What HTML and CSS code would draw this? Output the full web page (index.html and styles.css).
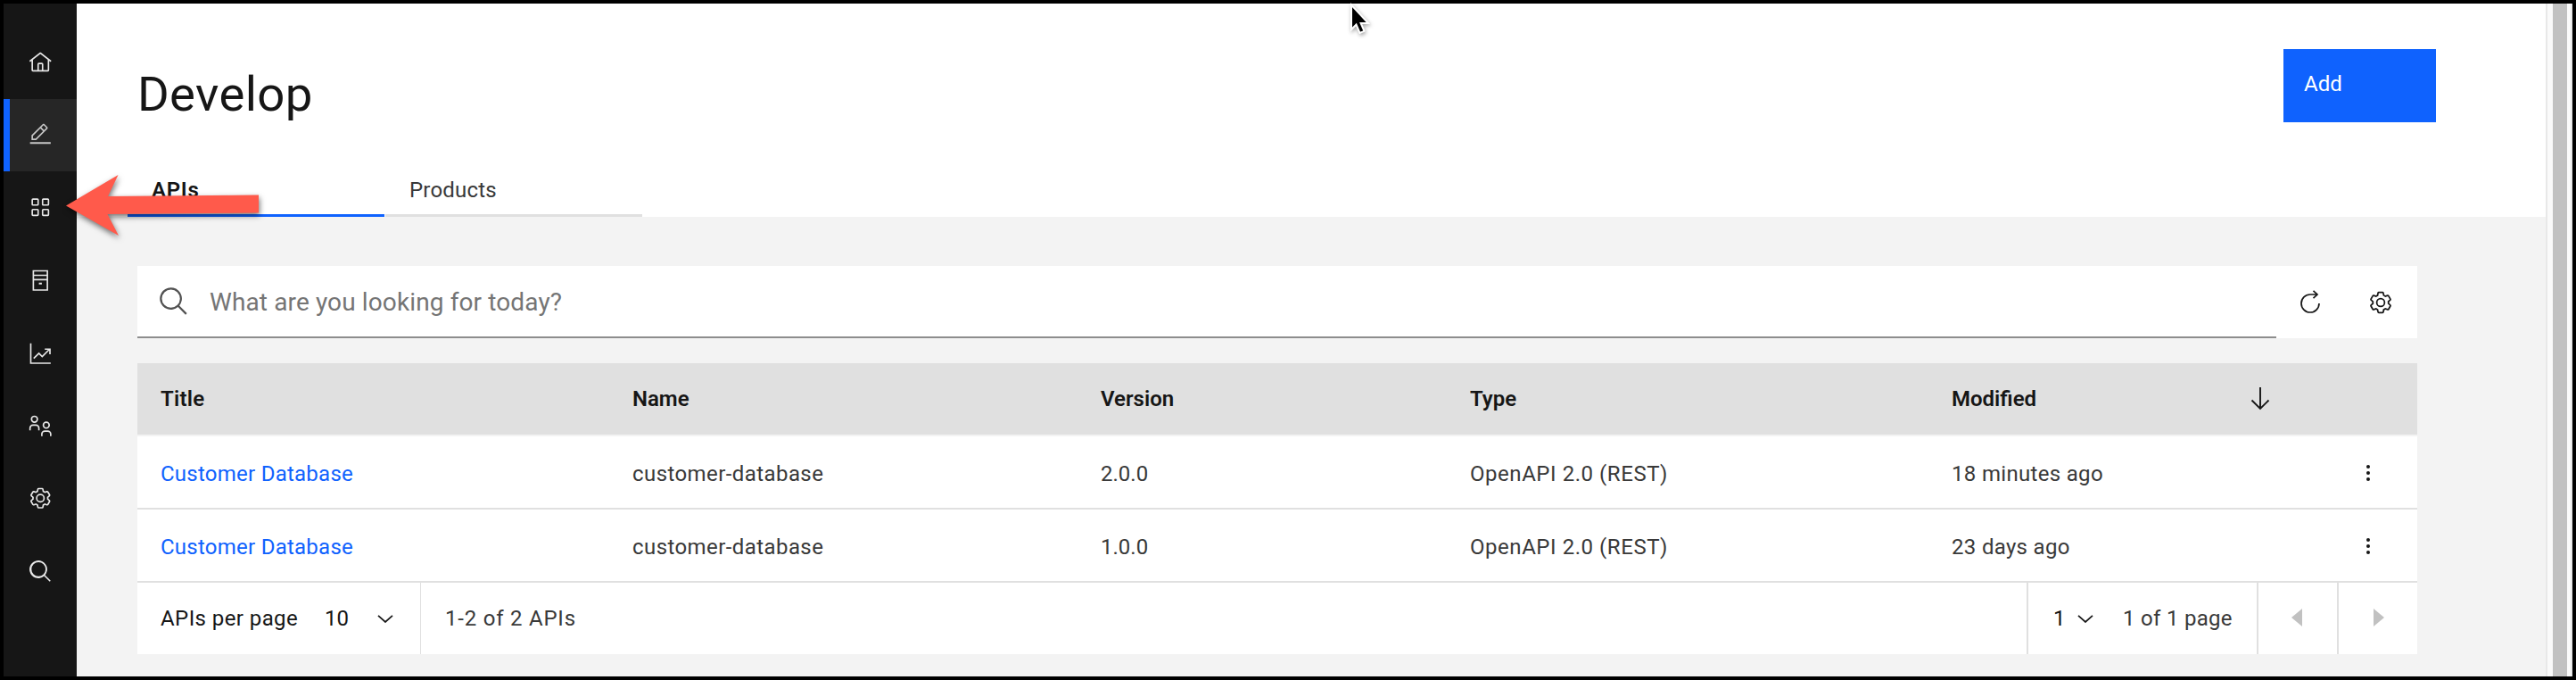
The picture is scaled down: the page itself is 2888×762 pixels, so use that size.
FILE: index.html
```
<!DOCTYPE html>
<html lang="en">
<head>
<meta charset="utf-8">
<title>Develop</title>
<link rel="stylesheet" href="styles.css">
</head>
<body>
<svg class="defs" width="0" height="0">
  <symbol id="gear" viewBox="0 0 32 32"><path d="M27,16.76c0-.25,0-.5,0-.76s0-.51,0-.77l1.92-1.68A2,2,0,0,0,29.3,11L26.94,7a2,2,0,0,0-1.73-1,2,2,0,0,0-.64.1l-2.43.82a11.35,11.35,0,0,0-1.31-.75l-.51-2.52a2,2,0,0,0-2-1.61H13.64a2,2,0,0,0-2,1.61l-.51,2.52a11.48,11.48,0,0,0-1.32.75L7.43,6.06A2,2,0,0,0,6.79,6,2,2,0,0,0,5.06,7L2.7,11a2,2,0,0,0,.41,2.51L5,15.24c0,.25,0,.5,0,.76s0,.51,0,.77L3.11,18.45A2,2,0,0,0,2.7,21L5.06,25a2,2,0,0,0,1.73,1,2,2,0,0,0,.64-.1l2.43-.82a11.35,11.35,0,0,0,1.31.75l.51,2.52a2,2,0,0,0,2,1.61h4.72a2,2,0,0,0,2-1.61l.51-2.52a11.48,11.48,0,0,0,1.32-.75l2.42.82a2,2,0,0,0,.64.1,2,2,0,0,0,1.73-1L29.3,21a2,2,0,0,0-.41-2.51ZM25.21,24l-3.43-1.16a8.86,8.86,0,0,1-2.71,1.57L18.36,28H13.64l-.71-3.55a9.36,9.36,0,0,1-2.7-1.57L6.79,24,4.43,20l2.72-2.4a8.9,8.9,0,0,1,0-3.13L4.43,12,6.79,8l3.43,1.16a8.86,8.86,0,0,1,2.71-1.57L13.64,4h4.72l.71,3.55a9.36,9.36,0,0,1,2.7,1.57L25.21,8,27.57,12l-2.72,2.4a8.9,8.9,0,0,1,0,3.13L27.57,20Z"/><path d="M16,22a6,6,0,1,1,6-6A5.94,5.94,0,0,1,16,22Zm0-10a3.91,3.91,0,0,0-4,4,3.91,3.91,0,0,0,4,4,3.91,3.91,0,0,0,4-4A3.91,3.91,0,0,0,16,12Z"/></symbol>
  <symbol id="search" viewBox="0 0 32 32"><path d="M29 27.6L21.4 20A11 11 0 1 0 20 21.4L27.6 29ZM4 13a9 9 0 1 1 9 9 9 9 0 0 1-9-9Z"/></symbol>
  <symbol id="search-nav" viewBox="0 0 32 32"><path d="M30 28.6L22.4 21A12 12 0 1 0 21 22.4L28.6 30ZM4 13.200a9.500 9.500 0 1 1 9.500 9.500 9.500 9.500 0 0 1-9.500-9.500Z"/></symbol>
  <symbol id="chevron" viewBox="0 0 18 9"><path d="M1 .8L9 8L17 .8" fill="none" stroke="currentColor" stroke-width="1.7"/></symbol>
</svg>
<div class="frame">
  <nav class="rail">
    <a class="rail-item"><svg class="icon" viewBox="0 0 32 32"><path d="M16.61 2.21a1 1 0 0 0-1.24 0L1 13.42l1.24 1.57L4 13.62V26a2 2 0 0 0 2 2H26a2 2 0 0 0 2-2V13.63L29.76 15 31 13.43ZM18 26H14V18h4Zm2 0V18a2 2 0 0 0-2-2H14a2 2 0 0 0-2 2v8H6V12.06l10-7.79 10 7.8V26Z"/></svg></a>
    <a class="rail-item active"><svg class="icon" viewBox="0 0 32 32"><path d="M2 27H30V29.2H2zM25.4 9c.8-.8.8-2 0-2.8l-3.6-3.6c-.8-.8-2-.8-2.8 0l-15 15V24h6.4zM20.4 4L24 7.6l-3 3L17.4 7zM6 22v-3.600l10-10 3.600 3.600-10 10z"/></svg></a>
    <a class="rail-item grid"><svg class="icon" viewBox="0 0 32 32"><path d="M12 4H6a2 2 0 0 0-2 2v6a2 2 0 0 0 2 2h6a2 2 0 0 0 2-2V6a2 2 0 0 0-2-2Zm0 8H6V6h6ZM26 4H20a2 2 0 0 0-2 2v6a2 2 0 0 0 2 2h6a2 2 0 0 0 2-2V6a2 2 0 0 0-2-2Zm0 8H20V6h6ZM12 18H6a2 2 0 0 0-2 2v6a2 2 0 0 0 2 2h6a2 2 0 0 0 2-2V20a2 2 0 0 0-2-2Zm0 8H6V20h6ZM26 18H20a2 2 0 0 0-2 2v6a2 2 0 0 0 2 2h6a2 2 0 0 0 2-2V20a2 2 0 0 0-2-2Zm0 8H20V20h6Z"/></svg></a>
    <a class="rail-item"><svg class="icon" viewBox="0 0 32 32"><path fill="none" stroke="currentColor" stroke-width="2" d="M6.500 3H25.500V29H6.500zM7 9H25M7 15H25"/><path d="M14 19h4v2.400h-4z"/></svg></a>
    <a class="rail-item"><svg class="icon" viewBox="0 0 32 32"><path fill="none" stroke="currentColor" stroke-width="2" d="M3 2V29H30M7 22.500L14 15.500L18.500 20L28.500 10M22 10H29V17"/></svg></a>
    <a class="rail-item"><svg class="icon" viewBox="0 0 32 32"><g fill="none" stroke="currentColor" stroke-width="2"><circle cx="8" cy="7" r="4"/><circle cx="24" cy="15" r="4"/><path d="M2 22V19a4 4 0 0 1 4-4H10a4 4 0 0 1 4 4V22M18 30V27a4 4 0 0 1 4-4H26a4 4 0 0 1 4 4V30"/></g></svg></a>
    <a class="rail-item"><svg class="icon"><use href="#gear"/></svg></a>
    <a class="rail-item"><svg class="icon"><use href="#search-nav"/></svg></a>
  </nav>
  <main class="main">
    <header class="head">
      <div class="head-top"><h1 class="title">Develop</h1><button class="add">Add</button></div>
      <div class="tabs"><a class="tab selected">APIs</a><a class="tab">Products</a></div>
    </header>
    <section class="content">
      <div class="toolbar">
        <div class="search"><svg class="search-icon"><use href="#search"/></svg><span class="placeholder">What are you looking for today?</span></div>
        <div class="tools">
          <svg class="refresh" viewBox="0 0 24 26"><path fill="none" stroke="currentColor" stroke-width="1.7" d="M22 15A10 10 0 1 1 12 5H20M15.500 .8L20 5L15.500 9.200"/></svg>
          <svg class="tool-gear"><use href="#gear"/></svg>
        </div>
      </div>
      <div class="table">
        <div class="row row-head"><span class="c-title">Title</span><span>Name</span><span>Version</span><span>Type</span><span>Modified</span><svg class="sort" viewBox="0 0 22 26"><path fill="none" stroke="currentColor" stroke-width="1.9" d="M11 0V24M1.500 14.500L11 24L20.500 14.500"/></svg></div>
        <div class="row"><a class="c-title link">Customer Database</a><span class="c-name">customer-database</span><span>2.0.0</span><span class="c-type">OpenAPI 2.0 (REST)</span><span class="c-mod">18 minutes ago</span><svg class="dots" viewBox="0 0 4 18"><circle cx="2" cy="2" r="2"/><circle cx="2" cy="9" r="2"/><circle cx="2" cy="16" r="2"/></svg></div>
        <div class="row"><a class="c-title link">Customer Database</a><span class="c-name">customer-database</span><span>1.0.0</span><span class="c-type">OpenAPI 2.0 (REST)</span><span class="c-mod">23 days ago</span><svg class="dots" viewBox="0 0 4 18"><circle cx="2" cy="2" r="2"/><circle cx="2" cy="9" r="2"/><circle cx="2" cy="16" r="2"/></svg></div>
      </div>
      <div class="pager">
        <div class="per-page"><span class="pp-label">APIs per page</span><span class="pp-value">10</span><svg class="chev"><use href="#chevron"/></svg></div>
        <span class="range">1-2 of 2 APIs</span>
        <div class="page-select"><span class="p-num">1</span><svg class="chev"><use href="#chevron"/></svg><span class="p-total">1 of 1 page</span></div>
        <div class="step prev"><svg class="tri" viewBox="0 0 12 20"><path d="M12 0V20L0 10Z"/></svg></div>
        <div class="step next"><svg class="tri" viewBox="0 0 12 20"><path d="M0 0V20L12 10Z"/></svg></div>
      </div>
    </section>
  </main>
  <div class="scroll"><div class="thumb"></div></div>
</div>
<svg class="arrow" viewBox="0 0 240 90"><path d="M14 50.500L72.500 16L61 40L230 38.500V58.500L60.500 60L73 84Z"/></svg>
<svg class="cursor" viewBox="0 0 24 40"><path d="M3 3.500V31L8.500 25.500L12.500 35L17.500 32.800L13.600 24H22Z" fill="#000" stroke="#fff" stroke-width="2"/></svg>
</body>
</html>
```
FILE: styles.css
```
* { box-sizing: border-box; }
body { margin: 0; width: 2888px; height: 762px; overflow: hidden; position: relative; font-family: Roboto, "Noto Sans", sans-serif; font-size: 24px; color: #161616; }
svg { display: block; fill: currentColor; flex: none; }
.defs { position: absolute; }
.frame { display: flex; width: 2888px; height: 762px; border: 4px solid #000; }

.rail { width: 82px; background: #161616; color: #e8e8e8; padding-top: 25.6px; flex: none; }
.rail-item { display: flex; align-items: center; justify-content: center; height: 81.4px; padding-left: 1px; }
.rail-item.active { background: #262626; color: #c6c6c6; border-left: 7px solid #0f62fe; padding: 0 6px 2px 0; }
.rail-item.grid { padding-bottom: 2px; }
.icon { width: 26.5px; height: 26.5px; }

.main { width: 2768px; background: #f3f3f3; flex: none; }
.head { height: 239px; background: #fff; display: flex; flex-direction: column; justify-content: space-between; }
.head-top { display: flex; justify-content: space-between; padding: 51px 123px 0 68px; }
.title { margin: 20px 0 0; font-size: 54.5px; line-height: 60px; font-weight: 400; letter-spacing: .35px; white-space: nowrap; }
.add { width: 171px; height: 82px; border: 0; padding: 0 0 4px 23px; background: #0f62fe; color: #fff; font: inherit; text-align: left; }
.tabs { display: flex; gap: 1px; padding-left: 57px; }
.tab { width: 288px; height: 62px; padding: 7px 0 0 27px; border-bottom: 3px solid #e0e0e0; color: #393939; line-height: 50px; letter-spacing: .2px; }
.tab.selected { border-color: #0f62fe; color: #161616; font-weight: 600; letter-spacing: .7px; }

.content { padding: 55px 0 0 68px; width: 2624px; }
.toolbar { display: flex; height: 81px; background: #fff; margin-bottom: 28px; }
.search { width: 2398px; border-bottom: 2px solid #8d8d8d; display: flex; align-items: center; padding-left: 23px; }
.search-icon { width: 36px; height: 36px; color: #525252; }
.placeholder { margin-left: 22px; padding-top: 2px; font-size: 28px; letter-spacing: .12px; color: #757575; white-space: nowrap; }
.tools { display: flex; align-items: center; padding-left: 26px; }
.refresh { width: 24px; height: 26px; margin-bottom: 2px; }
.tool-gear { width: 28px; height: 28px; margin-left: 53px; }

.row { display: grid; grid-template-columns: 529px 525px 414px 540px 334px 1fr; align-items: center; height: 82px; padding: 4px 0 0 26px; background: #fff; border-bottom: 2px solid #e0e0e0; white-space: nowrap; color: #393939; }
.row-head { background: #e0e0e0; border-color: #f3f3f3; color: #161616; font-weight: 600; padding-top: 0; padding-bottom: 1px; }
.c-title { letter-spacing: .25px; }
.c-name { letter-spacing: .42px; }
.c-type { letter-spacing: .55px; }
.c-mod { letter-spacing: .32px; }
.link { color: #0f62fe; }
.sort { width: 22px; height: 26px; margin-left: 1px; }
.dots { width: 4px; height: 18px; margin: -2px 0 0 131px; color: #161616; }

.pager { display: flex; align-items: center; height: 80px; background: #fff; }
.per-page { display: flex; align-items: center; width: 318px; height: 80px; padding-left: 26px; border-right: 1px solid #e0e0e0; }
.pp-label { width: 184px; letter-spacing: .42px; }
.pp-value { width: 59px; }
.chev { width: 18px; height: 9px; }
.range { flex: 1; padding-left: 27px; color: #393939; letter-spacing: .78px; }
.page-select { display: flex; align-items: center; width: 258px; height: 80px; border-left: 2px solid #e0e0e0; padding-left: 28px; }
.p-num { width: 27px; }
.p-total { margin-left: 33px; color: #393939; letter-spacing: .3px; }
.step { display: flex; align-items: center; height: 80px; width: 90px; border-left: 2px solid #e0e0e0; padding-bottom: 2px; }
.prev { padding-left: 37px; }
.next { padding-left: 39px; }
.tri { width: 12px; height: 20px; color: #c1c1c1; }

.scroll { flex: 1; display: flex; background: #fafafa; border-left: 2px solid #e8e8e8; border-right: 2px solid #e8e8e8; padding-left: 6px; }
.thumb { width: 16px; background: #c1c1c1; }

.arrow { position: absolute; left: 60px; top: 180px; width: 240px; height: 90px; fill: #ff5a4b; filter: drop-shadow(1px 3px 3px rgba(0, 0, 0, .55)); }
.cursor { position: absolute; left: 1512px; top: 2px; width: 24px; height: 40px; filter: drop-shadow(1px 2px 2px rgba(0, 0, 0, .35)); }
```
